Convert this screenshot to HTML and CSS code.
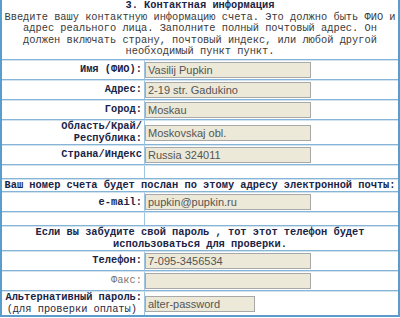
FILE: index.html
```html
<!DOCTYPE html>
<html>
<head>
<meta charset="utf-8">
<link rel="stylesheet" href="styles.css">
</head>
<body>
<table class="form">
  <tr>
    <td class="head" colspan="2">
      <div class="title">3. Контактная информация</div>
      <div class="desc">Введите вашу контактную информацию счета. Это должно быть ФИО и<br>адрес реального лица. Заполните полный почтовый адрес. Он<br>должен включать страну, почтовый индекс, или любой другой<br>необходимый пункт пункт.</div>
    </td>
  </tr>
  <tr>
    <td class="lbl">Имя (ФИО):</td>
    <td class="fld"><input class="inp" type="text" value="Vasilij Pupkin"></td>
  </tr>
  <tr>
    <td class="lbl">Адрес:</td>
    <td class="fld"><input class="inp" type="text" value="2-19 str. Gadukino"></td>
  </tr>
  <tr>
    <td class="lbl">Город:</td>
    <td class="fld"><input class="inp" type="text" value="Moskau"></td>
  </tr>
  <tr>
    <td class="lbl">Область/Край/<br>Республика:</td>
    <td class="fld"><input class="inp" type="text" value="Moskovskaj obl."></td>
  </tr>
  <tr>
    <td class="lbl">Страна/Индекс</td>
    <td class="fld"><input class="inp" type="text" value="Russia 324011"></td>
  </tr>
  <tr>
    <td class="lbl empty">&nbsp;</td>
    <td class="fld empty">&nbsp;</td>
  </tr>
  <tr>
    <td class="note" colspan="2">Ваш номер счета будет послан по этому адресу электронной почты:</td>
  </tr>
  <tr>
    <td class="lbl">e-mail:</td>
    <td class="fld"><input class="inp" type="text" value="pupkin@pupkin.ru"></td>
  </tr>
  <tr>
    <td class="lbl empty">&nbsp;</td>
    <td class="fld empty">&nbsp;</td>
  </tr>
  <tr>
    <td class="note" colspan="2">Если вы забудите свой пароль , тот этот телефон будет<br>использоваться для проверки.</td>
  </tr>
  <tr>
    <td class="lbl">Телефон:</td>
    <td class="fld"><input class="inp" type="text" value="7-095-3456534"></td>
  </tr>
  <tr>
    <td class="lbl light">Факс:</td>
    <td class="fld"><input class="inp" type="text" value=""></td>
  </tr>
  <tr>
    <td class="lbl">Альтернативный пароль:<br><span class="sub">(для проверки оплаты)</span></td>
    <td class="fld"><input class="inp short" type="text" value="alter-password"></td>
  </tr>
</table>
</body>
</html>
```
FILE: styles.css
```css
html, body {
  margin: 0;
  padding: 0;
  background: #ffffff;
}

.form {
  border-collapse: separate;
  border-spacing: 0;
  width: 400px;
  border: 2px solid #5a9ccc;
  border-top: 0;
  font-family: "Liberation Mono", "Courier New", monospace;
  font-size: 10.35px;
  line-height: 11.6px;
  color: #1a2446;
}

.form td {
  border-top: 1px solid #d2e3f0;
  border-bottom: 1px solid #86b4d6;
  padding: 0;
  vertical-align: middle;
}

.form tr:first-child td {
  border-top: 0;
}

.form tr:last-child td {
  border-bottom: 0;
}

.head {
  text-align: center;
}

.form td.head {
  padding: 0 1px 1px;
}

.title {
  font-weight: bold;
  color: #1a2446;
}

.desc {
  color: #3a3a3a;
  white-space: nowrap;
}

.lbl {
  width: 140px;
  text-align: right;
  font-weight: bold;
  border-right: 1px solid #9fc4e0;
  white-space: nowrap;
}

.form td.lbl {
  padding: 0 2px 0 0;
}

.form td.fld {
  padding: 1px 0;
}

.form td.empty {
  padding: 0;
}

.light {
  font-weight: normal;
  color: #777777;
}

.sub {
  font-weight: normal;
  color: #2a2a3a;
  padding-right: 5px;
}

.note {
  text-align: center;
  font-weight: bold;
  white-space: nowrap;
}

.inp {
  display: block;
  box-sizing: border-box;
  width: 166px;
  height: 16px;
  margin: 0;
  padding: 0 2px;
  border: 1px solid #a8a8a8;
  background: #ece9d8;
  font-family: "Liberation Sans", Arial, sans-serif;
  font-size: 11px;
  color: #555555;
}

.inp.short {
  width: 110px;
}
```
